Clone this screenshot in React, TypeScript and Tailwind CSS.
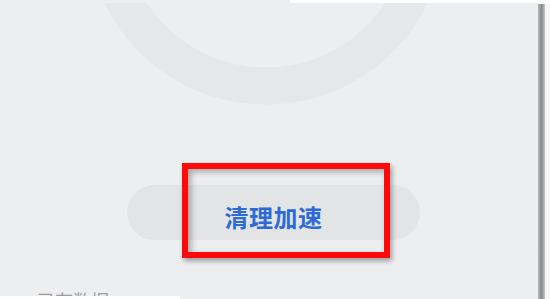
export default function App() {
  return (
    <div className="flex h-[299px] w-[550px] overflow-hidden bg-[#edeef0] font-['Noto_Sans_CJK_SC',sans-serif]">
      <div className="flex w-[538px] flex-col">
        <div className="flex h-[3px]">
          <div className="w-[290px]" />
          <div className="flex-1 bg-white" />
        </div>

        <svg width="538" height="182" className="block">
          <circle cx="266" cy="-78" r="161" fill="none" stroke="#e5e7e9" strokeWidth="37" />
        </svg>

        <div className="relative ml-[127px] flex h-[55px] w-[293px] items-center justify-center rounded-full bg-[#e2e4e6] pt-[8px]">
          <span className="text-[24px] font-semibold leading-none tracking-[0.5px] text-[#2d6ad8]">清理加速</span>
          <div className="absolute left-[55px] top-[-22px] h-[95px] w-[208px] border-[6px] border-[#ff0a0a] shadow-[2px_3px_5px_rgba(0,0,0,0.35),inset_3px_3px_6px_rgba(0,0,0,0.3)]" />
        </div>

        <div className="mt-[51px] h-[5px] overflow-hidden pl-[37px]">
          <span className="block text-[18px] leading-none text-[#9a9c9e]">已有数据</span>
        </div>
        <div className="h-[3px] w-[180px] bg-white" />
      </div>

      <div className="flex w-[12px] flex-col">
        <div className="h-[4px] bg-white" />
        <div className="flex flex-1">
          <div className="w-[7px] bg-gradient-to-r from-[#b8b9ba] via-[#8a8b8c] to-[#c4c5c6]" />
          <div className="flex-1 bg-[#f7f7f7]" />
        </div>
      </div>
    </div>
  );
}
